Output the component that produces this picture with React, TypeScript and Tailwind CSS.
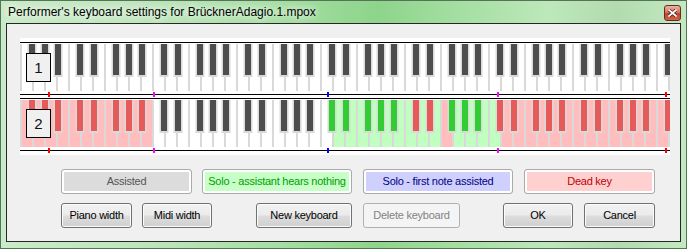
import React from 'react';

type KeyKind = 'normal' | 'dead' | 'solo';

const SEP = '#d9d9d9';
const X0 = 1; // left edge of F0 inside the panel
const OCTAVE = 84; // 7 white keys of 12px

// offsets from the F of each octave; white = left edge, black = centre
const LAYOUT: { white: boolean; off: number }[] = [
    { white: true, off: 0 }, // F
    { white: false, off: 11 }, // F#
    { white: true, off: 12 }, // G
    { white: false, off: 24 }, // G#
    { white: true, off: 24 }, // A
    { white: false, off: 37 }, // A#
    { white: true, off: 36 }, // B
    { white: true, off: 48 }, // C
    { white: false, off: 59 }, // C#
    { white: true, off: 60 }, // D
    { white: false, off: 73 }, // D#
    { white: true, off: 72 }, // E
];

const COLORS: Record<KeyKind, { white: string; black: string }> = {
    normal: { white: '#ffffff', black: '#4d4d4d' },
    dead: { white: '#ffbdbd', black: '#e65a5a' },
    solo: { white: '#c0ffc0', black: '#32cd32' },
};

const MARKERS = [
    { x: 28, color: '#ff0000' },
    { x: 133, color: '#ff00ff' },
    { x: 307, color: '#0000ff' },
    { x: 477, color: '#ff00ff' },
    { x: 645, color: '#ff0000' },
];

const allNormal = (): KeyKind => 'normal';

const secondKeyboard = (m: number): KeyKind => {
    if (m < 36 || m > 84) return 'dead';
    if (m <= 60) return 'normal';
    if (m === 73 || m === 75 || m === 77) return 'dead';
    return 'solo';
};

const Keyboard: React.FC<{ label: string; kindOf: (midi: number) => KeyKind }> = ({ label, kindOf }) => {
    const whites: React.ReactNode[] = [];
    const blacks: React.ReactNode[] = [];

    for (let m = 16; m <= 109; m++) {
        const rel = m - 17;
        const n = Math.floor(rel / 12);
        const s = ((rel % 12) + 12) % 12;
        const base = X0 + OCTAVE * n;
        const { white, off } = LAYOUT[s];
        const c = COLORS[kindOf(m)];

        if (white) {
            whites.push(<rect key={m} x={base + off + 1} y={2} width={10} height={47} fill={c.white} />);
        } else {
            const cx = base + off;
            blacks.push(
                <g key={m}>
                    <rect x={cx - 4.5} y={2} width={9} height={33} fill={SEP} />
                    <rect x={cx - 3} y={2} width={6} height={31} fill={c.black} />
                </g>
            );
        }
    }

    return (
        <div className="relative">
            <svg width={650} height={56} className="block">
                <rect x={0} y={2} width={650} height={47} fill={SEP} />
                {whites}
                {blacks}
                <rect x={0} y={0} width={650} height={1} fill="#000" />
                <rect x={0} y={52} width={650} height={1} fill="#000" />
                {MARKERS.map((mk) => (
                    <rect key={mk.x} x={mk.x} y={50} width={2} height={5} fill={mk.color} />
                ))}
            </svg>
            <div className="absolute left-[6px] top-[11px] w-[25px] h-[29px] border border-black bg-[#f0f0f0] flex items-center justify-center text-[15px] leading-none text-[#111]">
                {label}
            </div>
        </div>
    );
};

const LegendBox: React.FC<{ width: string; className: string; children: React.ReactNode }> = ({ width, className, children }) => (
    <div
        className={`${width} h-[25px] flex items-center justify-center rounded-[3px] border border-[#ababab] shadow-[inset_0_0_0_2px_#ffffff] ${className}`}
    >
        {children}
    </div>
);

const WinButton: React.FC<{ width: string; disabled?: boolean; children: React.ReactNode }> = ({ width, disabled, children }) => (
    <button
        disabled={disabled}
        className={
            disabled
                ? `${width} h-[25px] rounded-[3px] border border-[#adb2b5] bg-[#f4f4f4] text-[#838383]`
                : `${width} h-[25px] rounded-[3px] border border-[#707070] bg-[linear-gradient(180deg,#f2f2f2_0%,#ebebeb_48%,#dddddd_52%,#cfcfcf_100%)] shadow-[inset_0_0_0_1px_#fcfcfc] text-black`
        }
    >
        {children}
    </button>
);

export default function App() {
    return (
        <div className="w-[687px] h-[249px] overflow-hidden border border-[#56735a] bg-[linear-gradient(90deg,#c9ebc7_0%,#bfe6bd_20%,#a6dfa3_40%,#8ed48b_55%,#a3dea0_66%,#bde8bb_80%,#b2dbaf_90%,#c3e9c1_100%)] font-['Liberation_Sans',Arial,sans-serif]">
            {/* Title bar */}
            <div className="h-[22px] flex justify-between pl-[7px] pr-[5px]">
                <div className="pt-[4px] text-[12px] leading-[14px] text-black [text-shadow:0_0_6px_#ffffff,0_0_10px_#ffffff]">
                    Performer's keyboard settings for BrücknerAdagio.1.mpox
                </div>
                <div className="mt-[4px] w-[17px] h-[16px] rounded-[3px] border border-[#6b2a20] bg-[linear-gradient(180deg,#eeb3a4_0%,#d9735d_45%,#c0412a_55%,#d2644b_100%)] flex items-center justify-center">
                    <svg width="9" height="8" viewBox="0 0 9 8">
                        <path d="M1 1 L8 7 M8 1 L1 7" stroke="#3a1a14" strokeWidth="3.2" strokeLinecap="square" />
                        <path d="M1 1 L8 7 M8 1 L1 7" stroke="#ffffff" strokeWidth="1.8" strokeLinecap="square" />
                    </svg>
                </div>
            </div>

            {/* Client area */}
            <div className="mx-[5px] h-[219px] border border-[#262626] bg-[#f0f0f0] text-[11px] tracking-[-0.25px]">
                <div className="ml-[13px] mt-[14px] w-[650px] h-[117px] bg-white pt-[4px] flex flex-col tracking-normal">
                    <Keyboard label="1" kindOf={allNormal} />
                    <Keyboard label="2" kindOf={secondKeyboard} />
                </div>

                <div className="ml-[54px] mt-[14px] flex">
                    <LegendBox width="w-[131px]" className="bg-[#dcdcdc] text-[#555555]">Assisted</LegendBox>
                    <LegendBox width="w-[150px] ml-[10px]" className="bg-[#c8ffc8] text-[#00a000]">Solo - assistant hears nothing</LegendBox>
                    <LegendBox width="w-[150px] ml-[11px]" className="bg-[#d0d0ff] text-[#000080]">Solo - first note assisted</LegendBox>
                    <LegendBox width="w-[131px] ml-[11px]" className="bg-[#ffd0d0] text-[#c00000]">Dead key</LegendBox>
                </div>

                <div className="ml-[54px] mt-[9px] flex">
                    <WinButton width="w-[71px]">Piano width</WinButton>
                    <WinButton width="w-[70px] ml-[10px]">Midi width</WinButton>
                    <WinButton width="w-[96px] ml-[44px]">New keyboard</WinButton>
                    <WinButton width="w-[97px] ml-[11px]" disabled>Delete keyboard</WinButton>
                    <WinButton width="w-[70px] ml-[43px]">OK</WinButton>
                    <WinButton width="w-[71px] ml-[11px]">Cancel</WinButton>
                </div>
            </div>
        </div>
    );
}
